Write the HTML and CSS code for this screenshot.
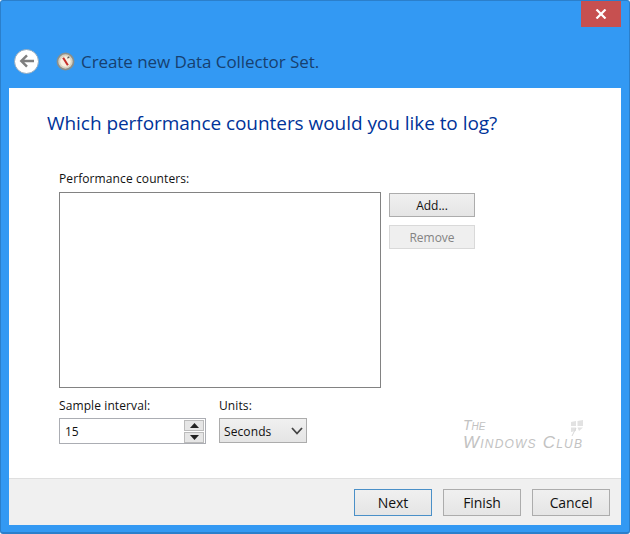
FILE: index.html
```html
<!DOCTYPE html>
<html lang="en">
<head>
<meta charset="utf-8">
<title>Create new Data Collector Set</title>
<link rel="stylesheet" href="styles.css">
</head>
<body>
<div class="window">
  <div class="titlebar">
    <div class="close"><svg width="12" height="10" viewBox="0 0 12 10"><path d="M1.5 0.5 L10.5 9.5 M10.5 0.5 L1.5 9.5" stroke="#fff" stroke-width="2.2" fill="none"/></svg></div>
    <div class="nav">
      <div class="back"><svg width="16" height="14" viewBox="0 0 18 16"><path d="M9 1.5 L2.5 8 L9 14.5 M3 8 H17" stroke="#7f7f7f" stroke-width="2.8" fill="none"/></svg></div>
      <svg class="appicon" width="19" height="19" viewBox="0 0 20 20"><circle cx="10" cy="10" r="8.5" fill="#d9d2c0" stroke="#8a8f8c" stroke-width="1.8"/><circle cx="10" cy="10" r="5.5" fill="#f7f0e2"/><path d="M7.5 6 L12.5 14" stroke="#c62f2a" stroke-width="2.2"/><path d="M12 6.5 L14 5" stroke="#555" stroke-width="1.2"/></svg>
      <span class="apptitle">Create new Data Collector Set.</span>
    </div>
  </div>
  <div class="content">
    <div class="body">
      <h1 class="heading">Which performance counters would you like to log?</h1>
      <div class="form">
        <label class="label">Performance counters:</label>
        <div class="counters">
          <div class="listbox"></div>
          <div class="sidebtns">
            <button class="btn side">Add...</button>
            <button class="btn side disabled">Remove</button>
          </div>
        </div>
        <div class="fields">
          <div class="field interval">
            <label class="label">Sample interval:</label>
            <div class="spin">
              <span class="spinval">15</span>
              <div class="spinbtns">
                <div class="spinbtn"><svg width="9" height="5" viewBox="0 0 9 5"><path d="M4.5 0 L9 5 H0 Z" fill="#222"/></svg></div>
                <div class="spinbtn"><svg width="9" height="5" viewBox="0 0 9 5"><path d="M0 0 H9 L4.5 5 Z" fill="#222"/></svg></div>
              </div>
            </div>
          </div>
          <div class="field">
            <label class="label">Units:</label>
            <div class="select"><span>Seconds</span><svg width="12" height="8" viewBox="0 0 12 8"><path d="M1 1 L6 6.5 L11 1" stroke="#444" stroke-width="1.8" fill="none"/></svg></div>
          </div>
        </div>
      </div>
      <div class="watermark">
        <div class="wm-the">The</div>
        <div class="wm-name">Windows Club</div>
        <svg class="wm-logo" width="16" height="18" viewBox="0 0 16 18"><path d="M2 3 L7 2 V7 H2 Z M8.5 2 L14 1 V7 H8.5 Z M2 8.5 H7 V12 L2 13 Z M8.5 8.5 H14 L10 12 Z" fill="#e2e2e2"/><path d="M3 17 L7 9" stroke="#d8d8d8" stroke-width="1"/></svg>
      </div>
    </div>
    <div class="footer">
      <button class="btn foot primary">Next</button>
      <button class="btn foot">Finish</button>
      <button class="btn foot">Cancel</button>
    </div>
  </div>
</div>
</body>
</html>
```
FILE: styles.css
```css
* { box-sizing: border-box; }
html, body { margin: 0; padding: 0; }
body { width: 630px; height: 534px; overflow: hidden; font-family: "Open Sans", "Noto Sans", sans-serif; background: #fff; }
.window {
  width: 630px; height: 534px;
  background: #3399f3;
  border: 1px solid #2b7fcb;
  border-bottom-width: 2px;
  border-radius: 3px;
  padding: 0 8px 7px 8px;
  display: flex; flex-direction: column;
}
.titlebar { height: 87px; flex: none; display: flex; flex-direction: column; }
.close {
  width: 40px; height: 26px; flex: none;
  margin-left: 572px;
  background: #c75050;
  display: flex; align-items: center; justify-content: center;
}
.nav { display: flex; align-items: center; margin: 19px 0 0 5px; height: 30px; }
.back {
  width: 25px; height: 25px; flex: none; border-radius: 50%;
  background: #fff; border: 1px solid #8fa9bf;
  display: flex; align-items: center; justify-content: center;
}
.appicon { margin-left: 17px; flex: none; }
.apptitle { margin-left: 6px; font-size: 17px; color: #17406f; white-space: nowrap; letter-spacing: -0.07px; }
.content { flex: 1; background: #fff; display: flex; flex-direction: column; position: relative; }
.body { flex: 1; position: relative; padding: 20px 0 0 38px; }
.heading { margin: 0; font-size: 19px; font-weight: 400; line-height: 30px; color: #003399; white-space: nowrap; letter-spacing: -0.05px; }
.form { margin: 33px 0 0 12px; }
.label { display: block; font-size: 12px; line-height: 16px; color: #111; white-space: nowrap; letter-spacing: 0.1px; }
.counters { display: flex; margin-top: 5px; }
.listbox { width: 322px; height: 196px; border: 1px solid #828282; background: #fff; flex: none; }
.sidebtns { display: flex; flex-direction: column; gap: 8px; margin: 1px 0 0 8px; }
.btn {
  font-family: inherit; padding: 0; color: #111;
  border: 1px solid #acacac;
  background: linear-gradient(#f0f0f0, #e5e5e5);
}
.side { width: 86px; height: 24px; font-size: 12px; }
.disabled { color: #838383; background: #efefef; border-color: #d9d9d9; }
.fields { display: flex; margin-top: 10px; }
.field { flex: none; }
.interval { width: 160px; }
.spin {
  width: 147px; height: 26px; margin-top: 4px;
  border: 1px solid #abadb3; background: #fff;
  display: flex; align-items: center; justify-content: space-between;
}
.spinval { font-size: 12px; color: #111; margin-left: 5px; }
.spinbtns { width: 20px; margin-right: 1px; display: flex; flex-direction: column; gap: 1px; }
.spinbtn {
  height: 11px; background: #e6e6e6; border: 1px solid #bcbcbc;
  display: flex; align-items: center; justify-content: center;
}
.select {
  width: 88px; height: 25px; margin-top: 4px;
  border: 1px solid #acacac; background: linear-gradient(#f0f0f0, #e5e5e5);
  display: flex; align-items: center; justify-content: space-between;
  padding: 1px 3px 0 4px; font-size: 12px; color: #111; letter-spacing: 0.1px;
}
.watermark { position: absolute; left: 454px; top: 330px; width: 122px; color: #c2c2c2; font-style: italic; font-variant: small-caps; font-family: "Liberation Sans", sans-serif; line-height: 1; }
.wm-the { font-size: 14px; font-weight: 400; }
.wm-name { font-size: 17px; letter-spacing: 1.2px; margin-top: 2px; white-space: nowrap; }
.wm-logo { position: absolute; right: 0; top: 1px; }
.footer {
  height: 47px; flex: none;
  background: #f0f0f0; border-top: 1px solid #dfdfdf;
  display: flex; justify-content: flex-end; gap: 11px;
  padding: 10px 11px 0 0;
}
.foot { width: 78px; height: 27px; font-size: 14px; letter-spacing: -0.1px; }
.primary { border-color: #4a90c8; }
```
